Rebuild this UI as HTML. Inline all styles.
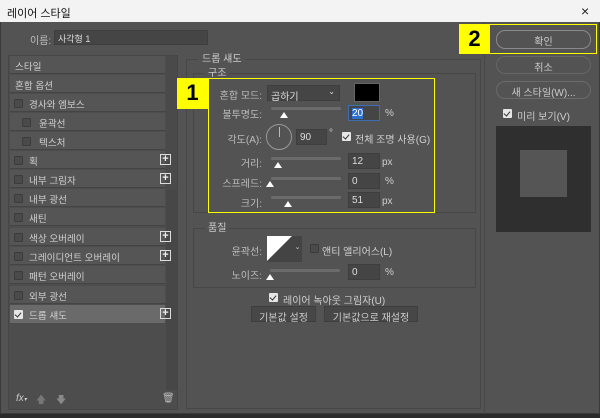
<!DOCTYPE html>
<html><head><meta charset="utf-8"><style>
*{box-sizing:border-box;margin:0;padding:0}
body{width:600px;height:418px;background:#2b2b2b;font-family:"Liberation Sans","Noto Sans CJK KR",sans-serif;font-size:10px;color:#cfcfcf;position:relative;overflow:hidden}
.a{position:absolute}
#win{left:0;top:0;width:600px;height:414px;background:#535353;border:1px solid #3a3a3a}
#title{left:0;top:0;width:600px;height:22px;background:#f3f3f3;color:#111;font-size:11px;padding:5px 0 0 7px}
.item{position:absolute;left:10px;width:155px;height:18px;background:#555;border-bottom:1px solid #444;padding:3px 0 0 5px;color:#d0d0d0;font-size:9.6px}
.cb{position:absolute;width:9px;height:9px;border:1px solid #3c3c3c;background:#4a4a4a;border-radius:1px}
.cbk{position:absolute;width:9px;height:9px;background:#e6e6e6;border-radius:1px}
.cbk:after{content:"";position:absolute;left:2px;top:1px;width:3px;height:5px;border:solid #333;border-width:0 1.5px 1.5px 0;transform:rotate(40deg)}
.plus{position:absolute;left:150px;top:3px;width:11px;height:11px;border:1px solid #ddd;color:#eee;font-size:11px;line-height:8px;text-align:center;font-weight:bold}
.lbl{position:absolute;text-align:right;width:80px;color:#bdbdbd}
.inp{position:absolute;background:#454545;border:1px solid #3e3e3e;color:#ddd;padding:2px 0 0 3px;height:16px}
.sl{position:absolute;height:3px;background:#6b6b6b;border-radius:2px}
.th{position:absolute;width:0;height:0;border-left:4px solid transparent;border-right:4px solid transparent;border-bottom:6px solid #fff}
.grp{position:absolute;border:1px solid #474747}
.btn{position:absolute;border:1px solid #7a7a7a;border-radius:9px;text-align:center;color:#ccc;padding-top:2px}
.sbtn{position:absolute;background:#474747;border:1px solid #3e3e3e;text-align:center;color:#ccc;padding-top:2px;height:16px}
.y{position:absolute;background:#ffff00;color:#000;font-weight:bold;font-size:22px;text-align:center;line-height:30px}
</style></head><body>
<div id="win" class="a"></div>
<div id="title" class="a">레이어 스타일</div>
<div class="a" style="left:581px;top:3px;color:#222;font-size:14px">×</div>

<div class="a" style="left:30px;top:32px;color:#bdbdbd">이름:</div>
<div class="inp" style="left:54px;top:30px;width:154px;height:15px;font-size:9px;padding-top:1px">사각형 1</div>

<div class="a" style="left:8px;top:55px;width:170px;height:355px;background:#4d4d4d;border:1px solid #464646"></div>
<div class="a" style="left:166px;top:56px;width:11px;height:134px;background:#4a4a4a"></div>
<div class="a" style="left:166px;top:190px;width:11px;height:200px;background:#474747"></div>
<div class="item" style="top:56px">스타일</div>
<div class="item" style="top:75px">혼합 옵션</div>
<div class="item" style="top:94px"><span class="cb" style="left:4px;top:5px"></span><span style="margin-left:14px">경사와 엠보스</span></div>
<div class="item" style="top:113px"><span class="cb" style="left:12px;top:5px"></span><span style="margin-left:24px">윤곽선</span></div>
<div class="item" style="top:132px"><span class="cb" style="left:12px;top:5px"></span><span style="margin-left:24px">텍스처</span></div>
<div class="item" style="top:151px"><span class="cb" style="left:4px;top:5px"></span><span style="margin-left:14px">획</span><span class="plus">+</span></div>
<div class="item" style="top:170px"><span class="cb" style="left:4px;top:5px"></span><span style="margin-left:14px">내부 그림자</span><span class="plus">+</span></div>
<div class="item" style="top:189px"><span class="cb" style="left:4px;top:5px"></span><span style="margin-left:14px">내부 광선</span></div>
<div class="item" style="top:208px"><span class="cb" style="left:4px;top:5px"></span><span style="margin-left:14px">새틴</span></div>
<div class="item" style="top:228px"><span class="cb" style="left:4px;top:5px"></span><span style="margin-left:14px">색상 오버레이</span><span class="plus">+</span></div>
<div class="item" style="top:247px"><span class="cb" style="left:4px;top:5px"></span><span style="margin-left:14px">그레이디언트 오버레이</span><span class="plus">+</span></div>
<div class="item" style="top:266px"><span class="cb" style="left:4px;top:5px"></span><span style="margin-left:14px">패턴 오버레이</span></div>
<div class="item" style="top:286px"><span class="cb" style="left:4px;top:5px"></span><span style="margin-left:14px">외부 광선</span></div>
<div class="item" style="top:305px;background:#6a6a6a;border:0"><span class="cbk" style="left:4px;top:5px"></span><span style="margin-left:14px">드롭 섀도</span><span class="plus">+</span></div>
<div class="a" style="left:16px;top:393px;font-style:italic;color:#ccc">fx<span style="font-size:6px">▾</span></div>
<div class="a" style="left:36px;top:393px;color:#777">🡅</div>
<div class="a" style="left:56px;top:393px;color:#888">🡇</div>
<div class="a" style="left:162px;top:393px;color:#bbb">🗑</div>

<div class="grp" style="left:186px;top:59px;width:295px;height:350px"></div>
<div class="a" style="left:198px;top:50px;background:#535353;padding:0 4px;color:#ccc">드롭 섀도</div>
<div class="grp" style="left:193px;top:73px;width:283px;height:140px"></div>
<div class="a" style="left:205px;top:64px;background:#535353;padding:0 3px;color:#ccc">구조</div>

<div class="a" style="left:208px;top:78px;width:227px;height:135px;border:1.5px solid #ffff00"></div>
<div class="y" style="left:177px;top:78px;width:31px;height:31px">1</div>

<div class="lbl" style="left:182px;top:87px">혼합 모드:</div>
<div class="inp" style="left:267px;top:85px;width:73px">곱하기<span style="position:absolute;right:4px;top:1px;font-size:8px">⌄</span></div>
<div class="a" style="left:354px;top:83px;width:26px;height:19px;background:#000;border:1px solid #666"></div>

<div class="lbl" style="left:182px;top:106px">불투명도:</div>
<div class="sl" style="left:271px;top:107px;width:70px"></div><div class="th" style="left:280px;top:112px"></div>
<div class="inp" style="left:348px;top:105px;width:32px;border-color:#3d6eb0"><span style="background:#2f6fd0;color:#fff">20</span></div>
<div class="a" style="left:385px;top:108px">%</div>

<div class="lbl" style="left:182px;top:131px">각도(A):</div>
<div class="a" style="left:266px;top:124px;width:26px;height:26px;border:1px solid #999;border-radius:50%"></div>
<div class="a" style="left:278.5px;top:127px;width:1px;height:10px;background:#bbb"></div>
<div class="inp" style="left:296px;top:129px;width:31px">90</div>
<div class="a" style="left:329px;top:128px">°</div>
<div class="cbk" style="left:342px;top:132px"></div>
<div class="a" style="left:355px;top:131px">전체 조명 사용(G)</div>

<div class="lbl" style="left:182px;top:155px">거리:</div>
<div class="sl" style="left:271px;top:157px;width:70px"></div><div class="th" style="left:274px;top:162px"></div>
<div class="inp" style="left:348px;top:153px;width:32px">12</div><div class="a" style="left:382px;top:157px">px</div>

<div class="lbl" style="left:182px;top:175px">스프레드:</div>
<div class="sl" style="left:271px;top:177px;width:70px"></div><div class="th" style="left:266px;top:181px"></div>
<div class="inp" style="left:348px;top:173px;width:32px">0</div><div class="a" style="left:385px;top:176px">%</div>

<div class="lbl" style="left:182px;top:195px">크기:</div>
<div class="sl" style="left:271px;top:196px;width:70px"></div><div class="th" style="left:284px;top:201px"></div>
<div class="inp" style="left:348px;top:192px;width:32px">51</div><div class="a" style="left:382px;top:196px">px</div>

<div class="grp" style="left:193px;top:228px;width:283px;height:60px"></div>
<div class="a" style="left:205px;top:219px;background:#535353;padding:0 3px;color:#ccc">품질</div>
<div class="lbl" style="left:182px;top:243px">윤곽선:</div>
<svg class="a" style="left:267px;top:236px" width="26" height="26"><rect width="26" height="26" fill="#444"/><polygon points="0,0 25,0 0,25" fill="#fff"/></svg>
<div class="a" style="left:293px;top:236px;width:9px;height:26px;background:#444;font-size:7px;text-align:center;padding-top:7px">⌄</div>
<div class="cb" style="left:310px;top:244px"></div>
<div class="a" style="left:322px;top:243px">앤티 앨리어스(L)</div>
<div class="lbl" style="left:182px;top:267px">노이즈:</div>
<div class="sl" style="left:270px;top:269px;width:70px"></div><div class="th" style="left:266px;top:274px"></div>
<div class="inp" style="left:348px;top:264px;width:32px">0</div><div class="a" style="left:385px;top:267px">%</div>

<div class="cbk" style="left:269px;top:293px"></div>
<div class="a" style="left:283px;top:292px">레이어 녹아웃 그림자(U)</div>
<div class="sbtn" style="left:251px;top:306px;width:65px">기본값 설정</div>
<div class="sbtn" style="left:324px;top:306px;width:94px">기본값으로 재설정</div>

<div class="a" style="left:484px;top:22px;width:1px;height:390px;background:#484848"></div>

<div class="a" style="left:459px;top:24px;width:138px;height:30px;border:1.5px solid #ffff00"></div>
<div class="y" style="left:459px;top:24px;width:31px;height:30px">2</div>
<div class="btn" style="left:496px;top:30px;width:95px;height:19px;border-color:#8a8a8a">확인</div>
<div class="btn" style="left:496px;top:56px;width:95px;height:18px;border-color:#666">취소</div>
<div class="btn" style="left:496px;top:81px;width:95px;height:18px;border-color:#6a6a6a">새 스타일(W)...</div>
<div class="cbk" style="left:503px;top:109px"></div>
<div class="a" style="left:517px;top:108px">미리 보기(V)</div>
<div class="a" style="left:496px;top:126px;width:95px;height:106px;background:#2f2f2f"></div>
<div class="a" style="left:520px;top:150px;width:47px;height:47px;background:#555"></div>
</body></html>
